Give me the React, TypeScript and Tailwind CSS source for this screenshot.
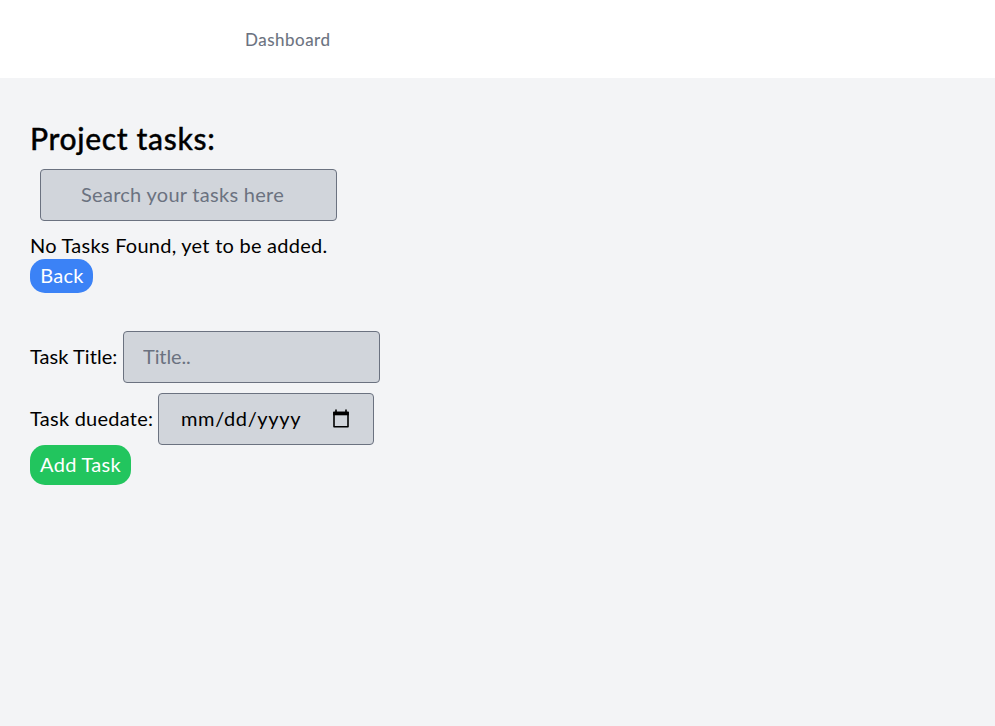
import React from "react";

function CalendarIcon() {
  return (
    <svg width="18" height="20" viewBox="0 0 18 20" fill="none" aria-hidden="true">
      <path d="M4 0.5v3M14 0.5v3" stroke="black" strokeWidth="1.6" />
      <path d="M2 3.5h14v14.2H2z" stroke="black" strokeWidth="1.6" strokeLinejoin="round" />
      <path d="M1.2 2.7h15.6v3.6H1.2z" fill="black" />
    </svg>
  );
}

export default function App() {
  return (
    <div className="h-[726px] overflow-hidden bg-[#f3f4f6] font-[Lato,'Open_Sans',sans-serif] text-xl text-black">
      <nav className="flex h-[78px] items-center bg-white pl-[245px] pt-[2px]">
        <a className="whitespace-nowrap text-[17px] leading-6 tracking-[0.5px] text-[#6b7280] [-webkit-text-stroke:0.1px]">Dashboard</a>
      </nav>
      <main className="flex flex-col items-start pl-[30px] pt-[42px]">
        <h1 className="h-[49px] whitespace-nowrap text-[30px] font-medium leading-9 tracking-[0.65px] [-webkit-text-stroke:0.35px]">Project tasks:</h1>
        <input
          className="ml-[10px] h-[52px] w-[297px] rounded border border-[#6b7280] bg-[#d1d5db] px-10 pb-[2px] tracking-[0.28px] placeholder:text-[#6b7280]"
          placeholder="Search your tasks here"
        />
        <p className="mt-[11px] h-[27px] whitespace-nowrap leading-[27px] tracking-[0.25px]">No Tasks Found, yet to be added.</p>
        <button className="flex h-[34px] w-[63px] items-center justify-center rounded-[15px] bg-[#3b82f6] pb-[2px] pl-[1px] tracking-[0.3px] text-white">Back</button>
        <div className="mt-[38px] flex h-[52px] items-center">
          <label className="w-[93px] whitespace-nowrap pb-[2px] tracking-[0.05px]">Task Title:</label>
          <input
            className="h-[52px] w-[257px] rounded border border-[#6b7280] bg-[#d1d5db] px-[19px] pb-[2px] tracking-[-0.1px] placeholder:text-[#6b7280]"
            placeholder="Title.."
          />
        </div>
        <div className="mt-[10px] flex h-[52px] items-center">
          <label className="w-[128px] whitespace-nowrap pb-[2px] tracking-[0.25px]">Task duedate:</label>
          <div className="flex h-[52px] w-[216px] items-center justify-between rounded border border-[#6b7280] bg-[#d1d5db] pl-[22px] pr-[23px]">
            <span className="whitespace-nowrap pb-[2px] tracking-[0.65px]">mm/dd/yyyy</span>
            <CalendarIcon />
          </div>
        </div>
        <button className="flex h-10 w-[101px] items-center justify-center whitespace-nowrap rounded-[15px] bg-[#22c55e] pb-[2px] tracking-[0.3px] text-white">Add Task</button>
      </main>
    </div>
  );
}
